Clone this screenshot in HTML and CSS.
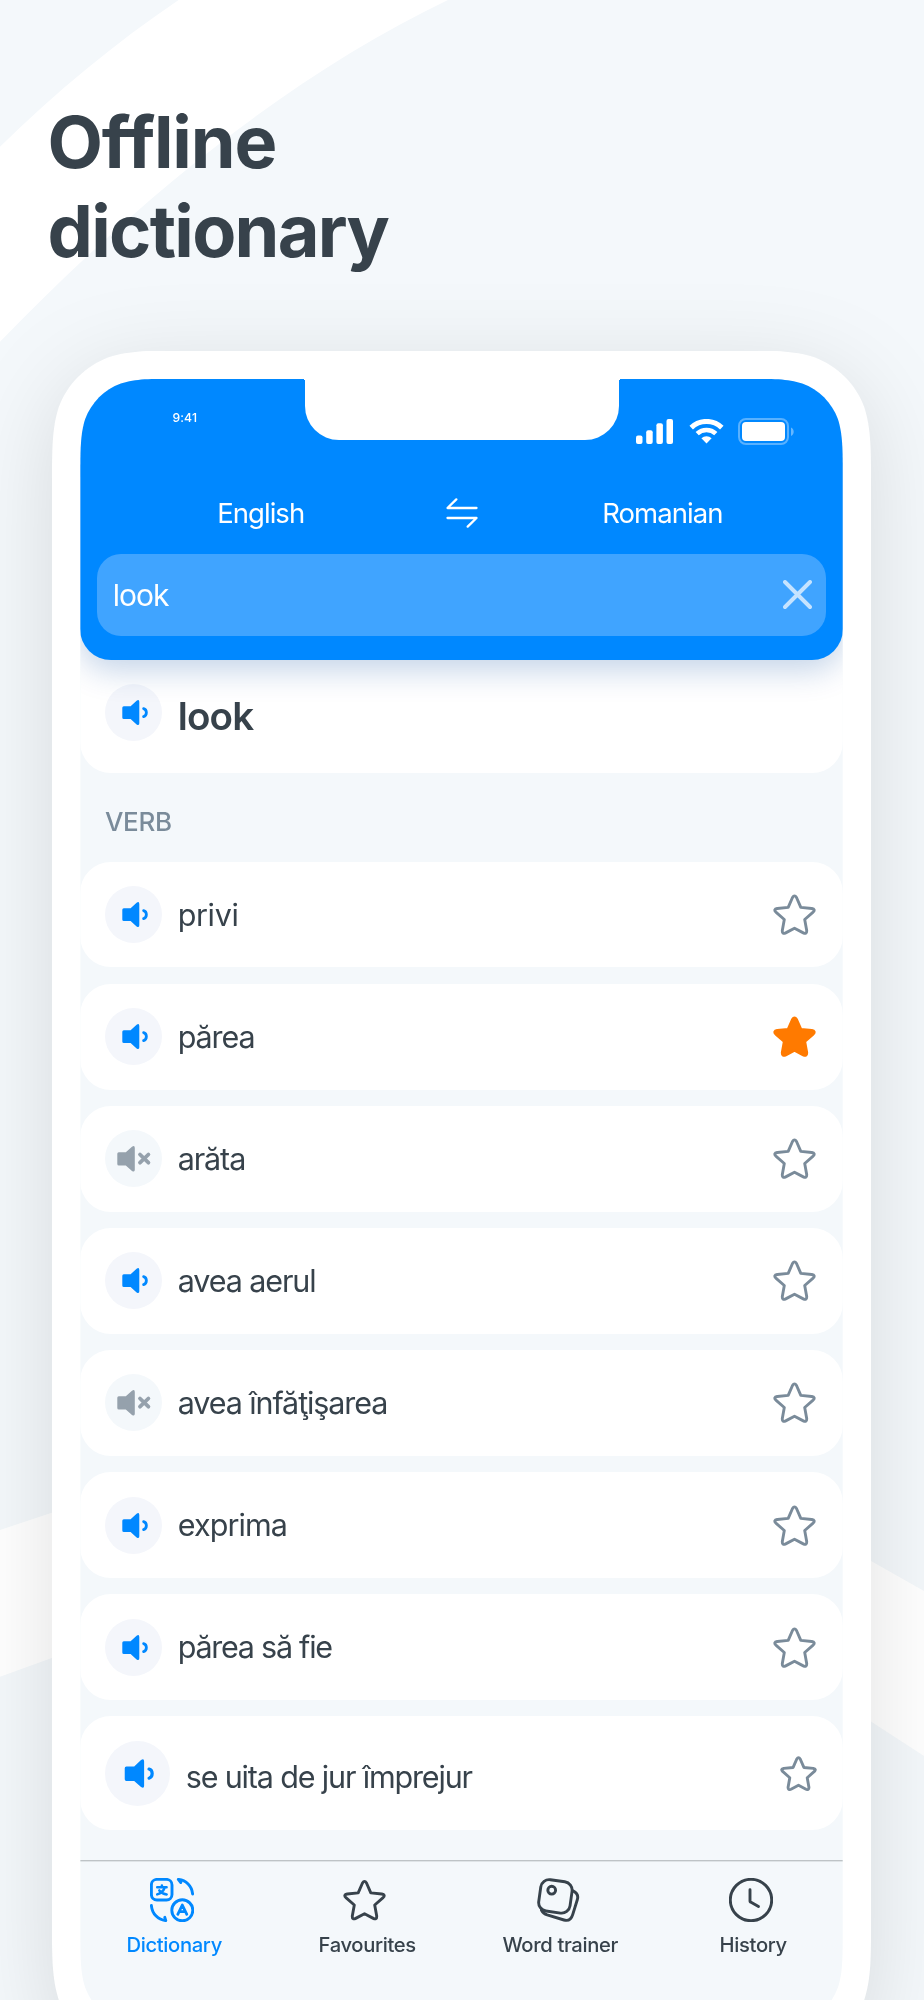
FILE: index.html
```html
<!DOCTYPE html>
<html lang="en">
<head>
<meta charset="utf-8">
<title>Offline dictionary</title>
<link rel="stylesheet" href="styles.css">
</head>
<body>
<svg class="sprite" aria-hidden="true">
  <symbol id="star" viewBox="-0.5 -0.5 43 41">
    <path d="M19 3Q21 -.3 23 3L27.3 12.9L38.3 14Q42.3 14.8 39.6 17.6L31.2 25L33.2 36Q33.4 40 29.8 38.4L21 33.8L12.2 38.4Q8.6 40 8.8 36L10.8 25L2.4 17.6Q-.3 14.8 3.7 14L14.7 12.9Z" stroke="currentColor" stroke-linejoin="round"/>
  </symbol>
  <symbol id="sound" viewBox="0 0 57 57">
    <path d="M18.8 22.3H25.6L31.6 16.7Q34.3 15 34.3 18V39.2Q34.3 42 31.6 40.4L25.6 35H18.8Q17.3 35 17.3 33.5V23.8Q17.3 22.3 18.8 22.3Z" fill="currentColor"/>
    <path d="M38.6 24.6C42.3 25.6 42.3 31.6 38.6 32.6" fill="none" stroke="currentColor" stroke-width="2.8" stroke-linecap="round"/>
  </symbol>
  <symbol id="mute" viewBox="0 0 57 57">
    <path d="M13.8 22.3H20.8L27 16.7Q29.8 15 29.8 18V39.7Q29.8 42.5 27 41L20.8 35.6H13.8Q12.3 35.6 12.3 34.1V23.8Q12.3 22.3 13.8 22.3Z" fill="currentColor"/>
    <path d="M35 24.5L43.4 32.7M43.4 24.5L35 32.7" fill="none" stroke="currentColor" stroke-width="3.8" stroke-linecap="round"/>
  </symbol>
</svg>

<main class="stage">
  <svg class="backdrop" viewBox="0 0 924 2000" fill="#fff" aria-hidden="true">
    <path d="M0 146.700C56 92 115 43 178.600 0H448C300 71 150 187 0 341.700Z"/>
    <path d="M0 1530L60 1510V1655L0 1676.700Z"/>
    <path d="M864 1557L924 1591V1756L864 1717Z"/>
  </svg>

  <h1 class="hero"><span class="hero__line hero__line--first">Offline</span><span class="hero__line">dictionary</span></h1>

  <div class="phone">
    <div class="phone__body">
      <div class="screen">
        <header class="header">
          <div class="notch"></div>
          <div class="status">
            <span class="status__time">9:41</span>
            <div class="status__icons">
              <svg width="37" height="25" viewBox="0 0 37 25" fill="#fff"><rect y="16.500" width="6.500" height="8.500" rx="2"/><rect x="10.200" y="11.300" width="6.500" height="13.700" rx="2"/><rect x="20.400" y="4.200" width="6.500" height="20.800" rx="2"/><rect x="30.500" width="6.500" height="25" rx="2"/></svg>
              <svg class="status__wifi" width="35" height="25" viewBox="0 0 35 25" fill="none" stroke="#fff"><path d="M2.200 8.600A22 22 0 0 1 32.800 8.600" stroke-width="5"/><path d="M8.200 14.700A13.500 13.500 0 0 1 26.800 14.700" stroke-width="4.600"/><path d="M12.400 19.300A7.400 7.400 0 0 1 22.600 19.300L17.500 24.500Z" fill="#fff" stroke="none"/></svg>
              <svg width="56" height="27" viewBox="0 0 56 27"><rect x="1" y="1" width="49" height="25" rx="7" fill="none" stroke="#fff" stroke-opacity=".35" stroke-width="2"/><rect x="4" y="4" width="43" height="19" rx="4" fill="#fff"/><path d="M53 9.500C56.600 11 56.600 16.500 53 18Z" fill="#fff" fill-opacity=".4"/></svg>
            </div>
          </div>
          <div class="languages">
            <span>English</span>
            <svg class="languages__swap" width="32" height="30" viewBox="0 0 32 30" fill="none" stroke="#fff" stroke-width="2.300" stroke-linecap="round" stroke-linejoin="round"><path d="M30.500 10H1.500L10.300 1.400M1.500 20H30.500L21.700 28.600"/></svg>
            <span>Romanian</span>
          </div>
          <div class="search">
            <span class="search__text">look</span>
            <svg width="29" height="29" viewBox="0 0 29 29" fill="none" stroke="#c5e3ff" stroke-width="3.900" stroke-linecap="round"><path d="M2 2L27 27M27 2L2 27"/></svg>
          </div>
        </header>

        <section class="headword">
          <span class="speaker"><svg><use href="#sound"/></svg></span>
          <h2 class="headword__text">look</h2>
        </section>

        <h3 class="part">VERB</h3>

        <ul class="list">
          <li class="card"><span class="speaker"><svg><use href="#sound"/></svg></span><span class="card__word card__word--wide">privi</span><svg class="star"><use href="#star"/></svg></li>
          <li class="card"><span class="speaker"><svg><use href="#sound"/></svg></span><span class="card__word">părea</span><svg class="star star--on"><use href="#star"/></svg></li>
          <li class="card"><span class="speaker speaker--off"><svg><use href="#mute"/></svg></span><span class="card__word">arăta</span><svg class="star"><use href="#star"/></svg></li>
          <li class="card"><span class="speaker"><svg><use href="#sound"/></svg></span><span class="card__word">avea aerul</span><svg class="star"><use href="#star"/></svg></li>
          <li class="card"><span class="speaker speaker--off"><svg><use href="#mute"/></svg></span><span class="card__word">avea înfăţişarea</span><svg class="star"><use href="#star"/></svg></li>
          <li class="card"><span class="speaker"><svg><use href="#sound"/></svg></span><span class="card__word card__word--medium">exprima</span><svg class="star"><use href="#star"/></svg></li>
          <li class="card"><span class="speaker"><svg><use href="#sound"/></svg></span><span class="card__word card__word--tight">părea să fie</span><svg class="star"><use href="#star"/></svg></li>
          <li class="card card--large"><span class="speaker"><svg><use href="#sound"/></svg></span><span class="card__word">se uita de jur împrejur</span><svg class="star"><use href="#star"/></svg></li>
        </ul>

        <nav class="tabs">
          <a class="tab tab--active">
            <svg class="tab__icon" viewBox="0 0 44 44"><rect x="1.400" y="1.400" width="20.600" height="20.600" rx="5.500"/><circle cx="32.300" cy="32.300" r="10.500"/><path d="M11.900 7.400V8.800M7.200 9.300H16.600M14.700 9.600C13.700 12.500 11 15.300 7.200 16.400M9.300 12.400C11 14.600 13.600 16 16.700 16.400" stroke-width="2.500"/><path d="M27.800 36.300L32.300 27L36.800 36.300M29.500 33.700H35.100" stroke-width="2.800"/><path d="M42.600 16C42 8.500 36 2 28.300 1.400L30.800 4.500M1.400 27.500C2 35.500 8 42 15.800 42.600L14.800 39.300"/></svg>
            <span>Dictionary</span>
          </a>
          <a class="tab">
            <svg class="tab__icon tab__icon--star"><use href="#star"/></svg>
            <span>Favourites</span>
          </a>
          <a class="tab">
            <svg class="tab__icon" viewBox="0 0 44 44"><rect x="3.600" y="2.600" width="31.600" height="31.600" rx="8.500" transform="rotate(8 19.400 18.400)"/><circle cx="15.700" cy="12.200" r="3.900"/><path d="M37 12.900C41.500 15 42.500 18 41.300 21.800L36.700 36.600C35.200 41.500 32.500 43.300 28 42L11.200 36.900C8.500 36 6.600 34.300 5.400 32"/></svg>
            <span>Word trainer</span>
          </a>
          <a class="tab">
            <svg class="tab__icon" viewBox="0 0 44 44"><circle cx="22" cy="22" r="20.700"/><path d="M21 11.800V23.200Q21 23.800 21.600 24.100L29.500 28.600"/></svg>
            <span>History</span>
          </a>
        </nav>
      </div>
    </div>
  </div>
</main>
</body>
</html>
```
FILE: styles.css
```css
* { box-sizing: border-box; }

body {
  margin: 0;
  background: #f4f8fb;
  color: #37424b;
  font-family: Inter, "Liberation Sans", sans-serif;
}

.sprite { position: absolute; width: 0; height: 0; }

.stage {
  position: relative;
  width: 924px;
  height: 2000px;
  overflow: hidden;
}

.backdrop {
  position: absolute;
  inset: 0;
  width: 924px;
  height: 2000px;
}

.hero {
  position: relative;
  margin: 0;
  padding: 96.500px 0 0 47.500px;
  font-size: 72px;
  font-weight: 700;
  line-height: 89px;
  letter-spacing: -1.700px;
}
.hero__line { display: block; }
.hero__line--first { letter-spacing: -1.110px; }

.phone {
  width: 819px;
  margin: 76px 0 0 52px;
  filter: drop-shadow(0 20px 45px rgba(0, 0, 0, .12));
}

.phone__body {
  height: 1706px;
  padding: 28.200px 28.400px 0;
  background: #fff;
  clip-path: path("M137.580 0H681.420C721.040 0 740.840 0 762.170 6.740C785.450 15.220 803.780 33.550 812.260 56.830C819 78.160 819 97.960 819 137.580V1568.420C819 1608.040 819 1627.840 812.260 1649.170C803.780 1672.450 785.450 1690.780 762.170 1699.260C740.840 1706 721.040 1706 681.420 1706H137.580C97.960 1706 78.160 1706 56.830 1699.260C33.550 1690.780 15.220 1672.450 6.740 1649.170C0 1627.840 0 1608.040 0 1568.420V137.580C0 97.960 0 78.160 6.740 56.830C15.220 33.550 33.550 15.220 56.830 6.740C78.160 0 97.960 0 137.580 0Z");
}

.screen {
  width: 762.300px;
  height: 1649.300px;
  overflow: hidden;
  background: #f4f8fb;
  clip-path: path("M97.830 0H664.470C692.640 0 706.720 0 721.880 4.790C738.440 10.820 751.480 23.860 757.510 40.420C762.300 55.580 762.300 69.660 762.300 97.830V1551.470C762.300 1579.640 762.300 1593.720 757.510 1608.880C751.480 1625.440 738.440 1638.480 721.880 1644.510C706.720 1649.300 692.640 1649.300 664.470 1649.300H97.830C69.660 1649.300 55.580 1649.300 40.420 1644.510C23.860 1638.480 10.820 1625.440 4.790 1608.880C0 1593.720 0 1579.640 0 1551.470V97.830C0 69.660 0 55.580 4.790 40.420C10.820 23.860 23.860 10.820 40.420 4.790C55.580 0 69.660 0 97.830 0Z");
}

.header {
  position: relative;
  z-index: 1;
  height: 281.300px;
  border-radius: 0 0 31px 31px;
  background: #08f;
  color: #fff;
  box-shadow: 0 10px 32px rgba(0, 70, 160, .24);
}

.notch {
  position: absolute;
  top: 0;
  left: 224.300px;
  width: 314px;
  height: 61px;
  border-radius: 0 0 34px 34px;
  background: #fff;
}
.notch::before,
.notch::after {
  content: "";
  position: absolute;
  top: -2px;
  width: 3px;
  height: 5px;
}
.notch::before { right: 100%; background: radial-gradient(circle at 0 100%, transparent 3px, #fff 3.500px); }
.notch::after { left: 100%; background: radial-gradient(circle at 100% 100%, transparent 3px, #fff 3.500px); }

.status {
  display: flex;
  justify-content: space-between;
  align-items: flex-start;
  height: 116.800px;
  padding: 30.900px 49px 0 92px;
}
.status__time {
  font-size: 12.200px;
  font-weight: 500;
  line-height: 16px;
  letter-spacing: .160px;
}
.status__icons {
  display: flex;
  align-items: center;
  margin-top: 8.200px;
}
.status__wifi { margin: 0 14px 0 16px; }

.languages {
  display: grid;
  grid-template-columns: 1fr 41px 1fr;
  align-items: center;
  justify-items: center;
  height: 36px;
  font-size: 27.500px;
  line-height: 36px;
  letter-spacing: -.950px;
}

.search {
  display: flex;
  align-items: center;
  justify-content: space-between;
  height: 81.700px;
  margin: 22.500px 16.300px 0;
  padding: 0 14px 0 16px;
  border-radius: 24px;
  background: #40a4ff;
}
.search__text {
  font-size: 30px;
  letter-spacing: -1px;
}

.headword {
  display: flex;
  gap: 16px;
  height: 143.500px;
  margin-top: -30px;
  padding: 53.800px 24.300px 0;
  border-radius: 0 0 31px 31px;
  background: #fff;
}
.headword__text {
  margin: 8.500px 0 0;
  font-size: 38.500px;
  font-weight: 600;
  line-height: 48px;
  letter-spacing: -.800px;
}

.speaker {
  flex: none;
  width: 57px;
  height: 57px;
  border-radius: 50%;
  background: #f4f6fb;
  color: #08f;
}
.speaker svg { display: block; width: 100%; height: 100%; }
.speaker--off { background: #f4f8fb; color: #95a1ac; }

.part {
  margin: 32px 0 22.200px 24.600px;
  color: #7a8b9a;
  font-size: 26px;
  font-weight: 500;
  line-height: 34px;
  letter-spacing: -.300px;
}

.list {
  display: flex;
  flex-direction: column;
  gap: 16.300px;
  margin: 0;
  padding: 0;
  list-style: none;
}

.card {
  display: flex;
  align-items: center;
  gap: 16px;
  height: 105.800px;
  padding: 0 26.800px 0 24.300px;
  border-radius: 31px;
  background: #fff;
}
.card__word {
  flex: 1;
  font-size: 30.500px;
  line-height: 38px;
  letter-spacing: -1.100px;
}
.card__word--wide { letter-spacing: -.350px; }
.card__word--medium { letter-spacing: -.900px; }
.card__word--tight { letter-spacing: -1.250px; }

.card--large { height: 114px; padding-right: 25.800px; }
.card--large .speaker { width: 65px; height: 65px; }
.card--large .card__word { padding-top: 8px; letter-spacing: -1.150px; }
.card--large .star { width: 37px; height: 35px; stroke-width: 3.400; }

.star {
  flex: none;
  width: 43px;
  height: 41px;
  fill: none;
  stroke-width: 2.900;
  color: #7a8b9a;
}
.star--on { fill: currentColor; color: #ff7a00; }

.tabs {
  display: grid;
  grid-template-columns: repeat(4, 193px);
  height: 170px;
  margin-top: 29.600px;
  padding-top: 17px;
  border-top: 1px solid #bec3c6;
  box-shadow: inset 0 1px #dfe4e7;
}
.tab {
  display: flex;
  flex-direction: column;
  align-items: center;
  gap: 9.800px;
  margin-left: -2.700px;
  margin-right: 2.700px;
  font-size: 20.200px;
  font-weight: 450;
  line-height: 26px;
  letter-spacing: -.340px;
}
.tab--active { color: #08f; }
.tab__icon {
  width: 44px;
  height: 44px;
  margin-right: 5px;
  fill: none;
  stroke: currentColor;
  stroke-width: 2.900;
  stroke-linecap: round;
  stroke-linejoin: round;
}
.tab__icon--star { width: 43px; }
```
